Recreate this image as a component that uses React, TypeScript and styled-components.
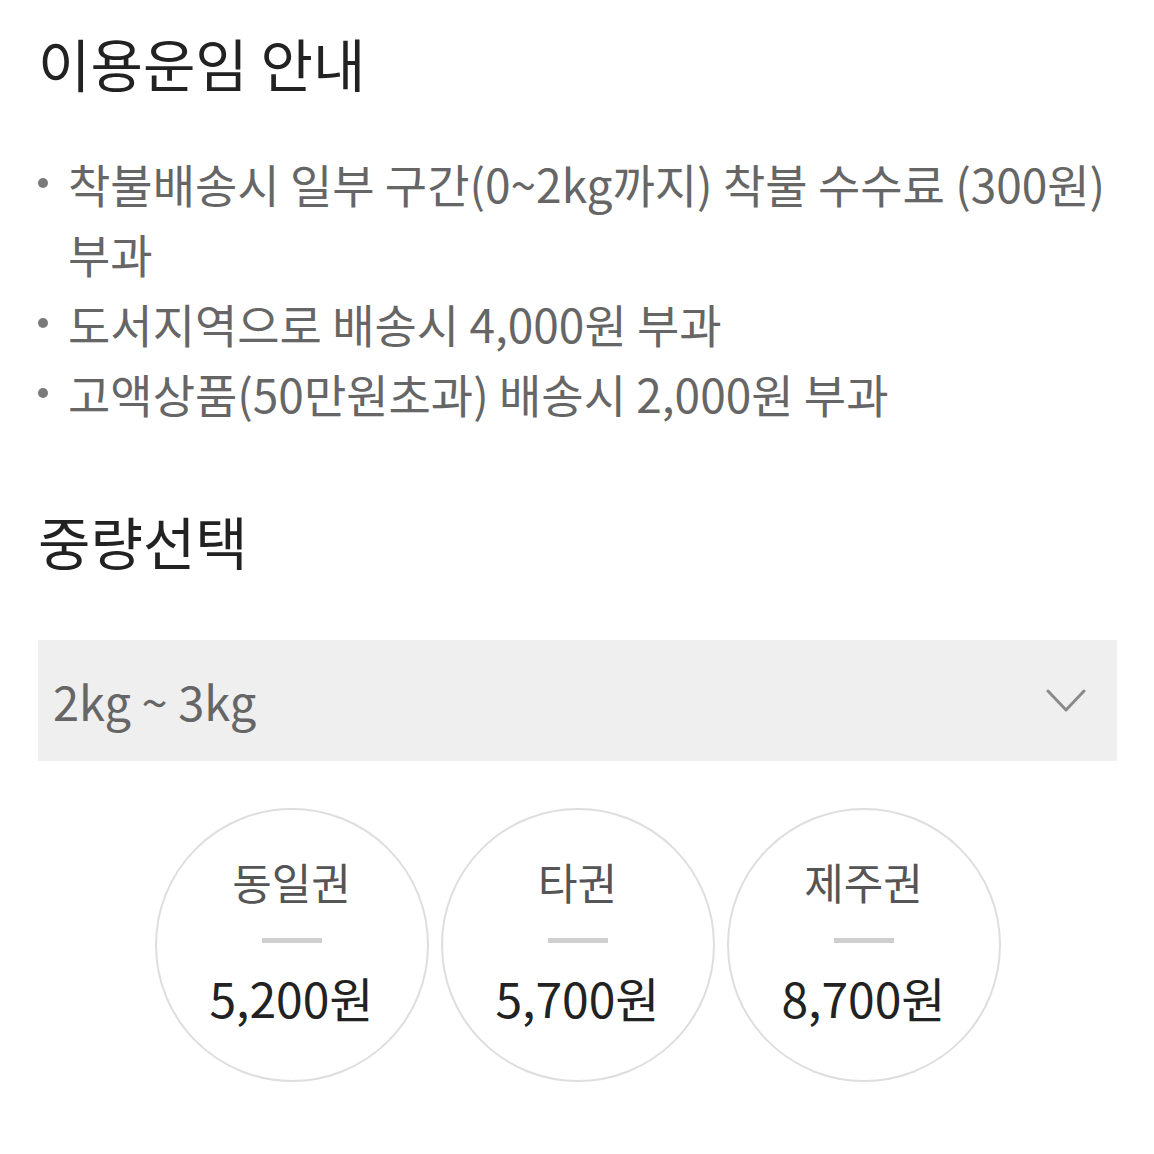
import styled, { createGlobalStyle } from "styled-components";

const GlobalStyle = createGlobalStyle`
  html, body {
    margin: 0;
    padding: 0;
    background: #fff;
  }
  body {
    font-family: "Noto Sans CJK KR", "Noto Sans", sans-serif;
  }
`;

const Page = styled.div`
  width: 1154px;
  box-sizing: border-box;
  padding: 27px 37px 60px 38px;
`;

const Title = styled.h2<{ $gap?: number }>`
  margin: ${(p) => p.$gap ?? 0}px 0 0;
  font-size: 57px;
  line-height: 70px;
  font-weight: 400;
  color: #222;
`;

const NoticeList = styled.ul`
  list-style: none;
  margin: 51px 0 0;
  padding: 0;
`;

const NoticeItem = styled.li`
  position: relative;
  padding-left: 30px;
  font-size: 46px;
  line-height: 70px;
  color: #666;

  &::before {
    content: "";
    position: absolute;
    left: 0;
    top: 30px;
    width: 10px;
    height: 10px;
    border-radius: 50%;
    background: #7a7a7a;
  }
`;

const Select = styled.div`
  margin-top: 65px;
  height: 121px;
  background: #efefef;
  display: flex;
  align-items: center;
  justify-content: space-between;
  padding: 0 31px 0 15px;
  font-size: 47px;
  color: #666;
`;

const Chevron = () => (
  <svg width="40" height="28" viewBox="0 0 40 28" fill="none">
    <polyline
      points="2,4 20,23 38,4"
      stroke="#8a8a8a"
      strokeWidth="3"
      strokeLinecap="round"
      strokeLinejoin="round"
    />
  </svg>
);

const Regions = styled.div`
  margin-top: 47px;
  display: flex;
  justify-content: center;
  gap: 12px;
`;

const Circle = styled.div`
  width: 274px;
  height: 274px;
  box-sizing: border-box;
  border: 2px solid #dedede;
  border-radius: 50%;
  display: flex;
  flex-direction: column;
  align-items: center;
  padding-top: 46px;
`;

const RegionName = styled.div`
  font-size: 43px;
  line-height: 50px;
  color: #555;
`;

const Dash = styled.div`
  width: 60px;
  height: 5px;
  background: #cfcfcf;
  margin: 32px 0 29px;
`;

const Price = styled.div`
  font-size: 48px;
  line-height: 50px;
  font-weight: 400;
  color: #222;
`;

const notices = [
  "착불배송시 일부 구간(0~2kg까지) 착불 수수료 (300원) 부과",
  "도서지역으로 배송시 4,000원 부과",
  "고액상품(50만원초과) 배송시 2,000원 부과",
];

const regions = [
  { name: "동일권", price: "5,200원" },
  { name: "타권", price: "5,700원" },
  { name: "제주권", price: "8,700원" },
];

export default function App() {
  return (
    <>
      <GlobalStyle />
      <Page>
        <Title>이용운임 안내</Title>
        <NoticeList>
          {notices.map((n) => (
            <NoticeItem key={n}>{n}</NoticeItem>
          ))}
        </NoticeList>
        <Title $gap={77}>중량선택</Title>
        <Select>
          <span>2kg ~ 3kg</span>
          <Chevron />
        </Select>
        <Regions>
          {regions.map((r) => (
            <Circle key={r.name}>
              <RegionName>{r.name}</RegionName>
              <Dash />
              <Price>{r.price}</Price>
            </Circle>
          ))}
        </Regions>
      </Page>
    </>
  );
}
